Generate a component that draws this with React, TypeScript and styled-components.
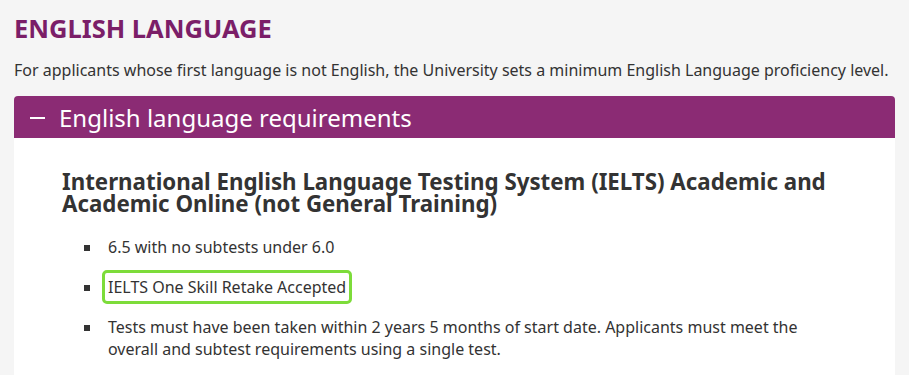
import styled, { createGlobalStyle } from 'styled-components';

const GlobalStyle = createGlobalStyle`
  body {
    margin: 0;
    background: #f5f5f5;
    font-family: 'Noto Sans', 'Open Sans', Arial, sans-serif;
    color: #333;
  }
`;

const Page = styled.main`
  padding: 0 14px;
  height: 375px;
  overflow: hidden;
`;

const Title = styled.h2`
  margin: 0;
  padding-top: 13px;
  font-size: 25.5px;
  line-height: 30px;
  font-weight: 700;
  color: #7b1e68;
`;

const Intro = styled.p`
  margin: 16px 0 0;
  font-size: 16px;
  line-height: 22px;
  color: #333;
`;

const Accordion = styled.section`
  margin-top: 15px;
`;

const AccordionHeader = styled.div`
  display: flex;
  align-items: center;
  gap: 14px;
  height: 42px;
  padding-left: 16px;
  background: #8b2b74;
  color: #fff;
  border-radius: 4px 4px 0 0;
  font-size: 24px;
`;

const Minus = styled.span`
  display: block;
  width: 15px;
  height: 2px;
  background: #fff;
  margin-top: 1px;
`;

const AccordionBody = styled.div`
  background: #fff;
  padding: 33px 48px 40px;
  min-height: 300px;
`;

const SubTitle = styled.h3`
  margin: 0;
  font-size: 22.3px;
  line-height: 22px;
  font-weight: 700;
  color: #333;
`;

const List = styled.ul`
  margin: 21px 0 0;
  padding: 0 0 0 46px;
  list-style: none;
  font-size: 16px;
  line-height: 22px;
  width: 705px;
`;

const Item = styled.li`
  position: relative;
  margin-bottom: 18px;

  &::before {
    content: '';
    position: absolute;
    left: -24px;
    top: 9px;
    width: 6px;
    height: 6px;
    background: #333;
  }
`;

const Highlight = styled.span<{ $color: string }>`
  margin-left: -6px;
  padding: 3px 3px;
  border: 3px solid ${(p) => p.$color};
  border-radius: 5px;
`;

export default function App() {
  return (
    <>
      <GlobalStyle />
      <Page>
        <Title>ENGLISH LANGUAGE</Title>
        <Intro>
          For applicants whose first language is not English, the University sets a minimum
          English Language proficiency level.
        </Intro>
        <Accordion>
          <AccordionHeader>
            <Minus />
            <span>English language requirements</span>
          </AccordionHeader>
          <AccordionBody>
            <SubTitle>
              International English Language Testing System (IELTS) Academic and Academic
              Online (not General Training)
            </SubTitle>
            <List>
              <Item>6.5 with no subtests under 6.0</Item>
              <Item>
                <Highlight $color="#7ddc3a">IELTS One Skill Retake Accepted</Highlight>
              </Item>
              <Item>
                Tests must have been taken within 2 years 5 months of start date. Applicants must
                meet the overall and subtest requirements using a single test.
              </Item>
            </List>
          </AccordionBody>
        </Accordion>
      </Page>
    </>
  );
}
